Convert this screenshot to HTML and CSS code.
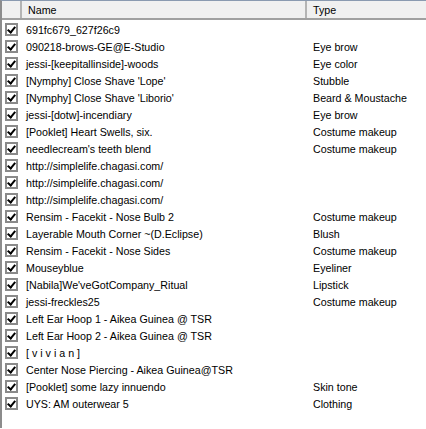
FILE: index.html
```html
<!DOCTYPE html>
<html>
<head>
<meta charset="utf-8">
<link rel="stylesheet" href="styles.css">
</head>
<body>
<div class="list">
  <div class="header">
    <div class="hcell hcheck"></div>
    <div class="hcell hname">Name</div>
    <div class="hcell htype">Type</div>
  </div>
  <div class="rows">
    <div class="row"><span class="cb"></span><span class="name">691fc679_627f26c9</span><span class="type"></span></div>
    <div class="row"><span class="cb"></span><span class="name">090218-brows-GE@E-Studio</span><span class="type">Eye brow</span></div>
    <div class="row"><span class="cb"></span><span class="name">jessi-[keepitallinside]-woods</span><span class="type">Eye color</span></div>
    <div class="row"><span class="cb"></span><span class="name">[Nymphy] Close Shave 'Lope'</span><span class="type">Stubble</span></div>
    <div class="row"><span class="cb"></span><span class="name">[Nymphy] Close Shave 'Liborio'</span><span class="type">Beard &amp; Moustache</span></div>
    <div class="row"><span class="cb"></span><span class="name">jessi-[dotw]-incendiary</span><span class="type">Eye brow</span></div>
    <div class="row"><span class="cb"></span><span class="name">[Pooklet] Heart Swells, six.</span><span class="type">Costume makeup</span></div>
    <div class="row"><span class="cb"></span><span class="name">needlecream's teeth blend</span><span class="type">Costume makeup</span></div>
    <div class="row"><span class="cb"></span><span class="name">http://simplelife.chagasi.com/</span><span class="type"></span></div>
    <div class="row"><span class="cb"></span><span class="name">http://simplelife.chagasi.com/</span><span class="type"></span></div>
    <div class="row"><span class="cb"></span><span class="name">http://simplelife.chagasi.com/</span><span class="type"></span></div>
    <div class="row"><span class="cb"></span><span class="name">Rensim - Facekit - Nose Bulb 2</span><span class="type">Costume makeup</span></div>
    <div class="row"><span class="cb"></span><span class="name">Layerable Mouth Corner ~(D.Eclipse)</span><span class="type">Blush</span></div>
    <div class="row"><span class="cb"></span><span class="name">Rensim - Facekit - Nose Sides</span><span class="type">Costume makeup</span></div>
    <div class="row"><span class="cb"></span><span class="name">Mouseyblue</span><span class="type">Eyeliner</span></div>
    <div class="row"><span class="cb"></span><span class="name">[Nabila]We'veGotCompany_Ritual</span><span class="type">Lipstick</span></div>
    <div class="row"><span class="cb"></span><span class="name">jessi-freckles25</span><span class="type">Costume makeup</span></div>
    <div class="row"><span class="cb"></span><span class="name">Left Ear Hoop 1 - Aikea Guinea @ TSR</span><span class="type"></span></div>
    <div class="row"><span class="cb"></span><span class="name">Left Ear Hoop 2 - Aikea Guinea @ TSR</span><span class="type"></span></div>
    <div class="row"><span class="cb"></span><span class="name">[ v i v i a n ]</span><span class="type"></span></div>
    <div class="row"><span class="cb"></span><span class="name wide">Center Nose Piercing - Aikea Guinea@TSR</span><span class="type"></span></div>
    <div class="row"><span class="cb"></span><span class="name">[Pooklet] some lazy innuendo</span><span class="type">Skin tone</span></div>
    <div class="row"><span class="cb"></span><span class="name">UYS: AM outerwear 5</span><span class="type">Clothing</span></div>
  </div>
</div>
</body>
</html>
```
FILE: styles.css
```css
html, body {
  margin: 0;
  padding: 0;
  background: #ffffff;
}
body {
  font-family: "Liberation Sans", Arial, sans-serif;
  font-size: 10.7px;
  color: #000;
  width: 426px;
  height: 429px;
  overflow: hidden;
}
.list {
  border-top: 1px solid #8a9ab0;
  border-left: 2px solid #8c8c8c;
  height: 428px;
  box-sizing: border-box;
}
.header {
  display: flex;
  height: 19px;
  background: #f0f0f0;
  border-bottom: 2px solid #a0a0a0;
  box-sizing: border-box;
}
.hcell {
  height: 100%;
  box-sizing: border-box;
  padding-left: 6px;
  line-height: 18px;
  border-right: 2px solid #b4b4b4;
}
.hcheck { width: 20px; padding: 0; }
.hname { width: 285px; }
.htype { flex: 1; border-right: none; }
.rows {
  padding-top: 1px;
}
.row {
  display: flex;
  align-items: center;
  height: 17px;
  white-space: nowrap;
}
.cb {
  width: 13px;
  height: 13px;
  box-sizing: border-box;
  border: 2px solid #8a8a8a;
  margin-left: 3px;
  background: #fff;
  position: relative;
  flex: none;
}
.cb::after {
  content: "";
  position: absolute;
  left: 2px;
  top: 0px;
  width: 3px;
  height: 6px;
  border-right: 2px solid #000;
  border-bottom: 2px solid #000;
  transform: rotate(40deg);
}
.name {
  width: 284px;
  padding-left: 8px;
  overflow: hidden;
  flex: none;
}
.name.wide { overflow: visible; }
.type {
  padding-left: 3px;
}
```
